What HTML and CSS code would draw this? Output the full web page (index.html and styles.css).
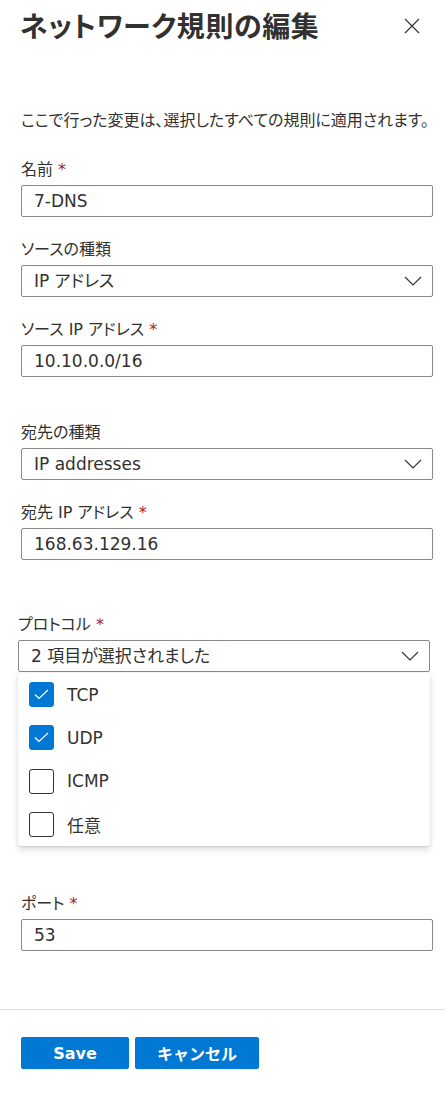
FILE: index.html
```html
<!DOCTYPE html>
<html lang="ja">
<head>
<meta charset="utf-8">
<title>ネットワーク規則の編集</title>
<link rel="stylesheet" href="styles.css">
</head>
<body>
<div class="panel">
  <header class="header">
    <h1 class="title">ネットワーク規則の編集</h1>
    <button class="close" aria-label="閉じる">
      <svg width="16" height="16" viewBox="0 0 16 16"><path d="M1 1 L15 15 M15 1 L1 15" stroke="#323130" stroke-width="1.2" fill="none"/></svg>
    </button>
  </header>

  <main class="body">
    <p class="desc">ここで行った変更は、選択したすべての規則に適用されます。</p>

    <div class="field">
      <label class="label">名前 <span class="req">*</span></label>
      <div class="input">7-DNS</div>
    </div>

    <div class="field">
      <label class="label">ソースの種類</label>
      <div class="input select">IP アドレス
        <svg class="chev" width="18" height="10" viewBox="0 0 18 10"><path d="M1 1 L9 9 L17 1" stroke="#323130" stroke-width="1.1" fill="none"/></svg>
      </div>
    </div>

    <div class="field field-gap">
      <label class="label">ソース IP アドレス <span class="req">*</span></label>
      <div class="input">10.10.0.0/16</div>
    </div>

    <div class="field">
      <label class="label">宛先の種類</label>
      <div class="input select">IP addresses
        <svg class="chev" width="18" height="10" viewBox="0 0 18 10"><path d="M1 1 L9 9 L17 1" stroke="#323130" stroke-width="1.1" fill="none"/></svg>
      </div>
    </div>

    <div class="field field-gap2">
      <label class="label">宛先 IP アドレス <span class="req">*</span></label>
      <div class="input">168.63.129.16</div>
    </div>

    <div class="field protocol">
      <label class="label">プロトコル <span class="req">*</span></label>
      <div class="input select">2 項目が選択されました
        <svg class="chev" width="18" height="10" viewBox="0 0 18 10"><path d="M1 1 L9 9 L17 1" stroke="#323130" stroke-width="1.1" fill="none"/></svg>
      </div>
      <ul class="options">
        <li class="option"><span class="cb checked"><svg width="15" height="11" viewBox="0 0 15 11"><path d="M1 5.5 L5 9.5 L14 1" stroke="#fff" stroke-width="1.2" fill="none"/></svg></span>TCP</li>
        <li class="option"><span class="cb checked"><svg width="15" height="11" viewBox="0 0 15 11"><path d="M1 5.5 L5 9.5 L14 1" stroke="#fff" stroke-width="1.2" fill="none"/></svg></span>UDP</li>
        <li class="option"><span class="cb"></span>ICMP</li>
        <li class="option"><span class="cb"></span>任意</li>
      </ul>
    </div>

    <div class="field">
      <label class="label">ポート <span class="req">*</span></label>
      <div class="input">53</div>
    </div>
  </main>

  <footer class="footer">
    <button class="btn">Save</button>
    <button class="btn">キャンセル</button>
  </footer>
</div>
</body>
</html>
```
FILE: styles.css
```css
* { box-sizing: border-box; }
html, body { margin: 0; padding: 0; background: #fff; }
body {
  font-family: "DejaVu Sans", "Noto Sans CJK JP", sans-serif;
  font-feature-settings: "palt";
  color: #323130;
  font-size: 16px;
}
.panel { width: 445px; }
.header {
  display: flex;
  justify-content: space-between;
  align-items: flex-start;
  padding: 7px 0 0 20px;
}
.title {
  margin: 0;
  font-size: 28px;
  line-height: 36px;
  font-weight: 700;
  font-family: "Noto Sans CJK JP", sans-serif;
  letter-spacing: 0.6px;
}
.close {
  border: 0;
  background: none;
  padding: 0;
  margin: 11px 25px 0 0;
  width: 16px;
  height: 16px;
  display: flex;
}
.body { padding: 0 12px 0 21px; }
.desc {
  margin: 68px 0 29px 0;
  font-size: 16px;
  line-height: 20px;
  white-space: nowrap;
  letter-spacing: 0;
}
.field { margin-bottom: 23px; }
.field-gap { margin-bottom: 46px; }
.field-gap2 { margin-bottom: 55px; }
.label {
  display: block;
  font-size: 16px;
  line-height: 20px;
  margin-bottom: 5px;
}
.req { color: #a4262c; }
.input {
  height: 32px;
  border: 1px solid #8a8886;
  border-radius: 2px;
  padding: 0 12px;
  display: flex;
  align-items: center;
  font-size: 17px;
  line-height: 20px;
}
.select { justify-content: space-between; }
.chev { margin-right: -2px; }
.protocol {
  margin-left: -3px;
  margin-right: 3px;
  margin-bottom: 48px;
}
.options {
  list-style: none;
  margin: 1px 0 0 0;
  padding: 0;
  background: #fff;
  border-radius: 2px;
  box-shadow: 0 3.2px 7.2px rgba(0,0,0,0.13), 0 0.6px 1.8px rgba(0,0,0,0.11);
}
.option {
  height: 43.3px;
  display: flex;
  align-items: center;
  padding-left: 11px;
  gap: 13px;
  font-size: 17px;
}
.cb {
  width: 25px;
  height: 25px;
  border: 1px solid #323130;
  border-radius: 3px;
  display: flex;
  align-items: center;
  justify-content: center;
  flex: none;
}
.cb.checked { background: #0078d4; border-color: #0078d4; }
.footer {
  margin-top: 58px;
  border-top: 1px solid #e1dfdd;
  padding: 27px 0 0 21px;
  display: flex;
  gap: 6px;
}
.btn {
  height: 32px;
  border: 0;
  border-radius: 2px;
  background: #0078d4;
  color: #fff;
  font-family: "DejaVu Sans", "Noto Sans CJK JP", sans-serif;
  font-weight: 700;
  font-size: 16px;
  padding: 0;
}
.btn:first-child { width: 108px; }
.btn:last-child { width: 124px; }
```
